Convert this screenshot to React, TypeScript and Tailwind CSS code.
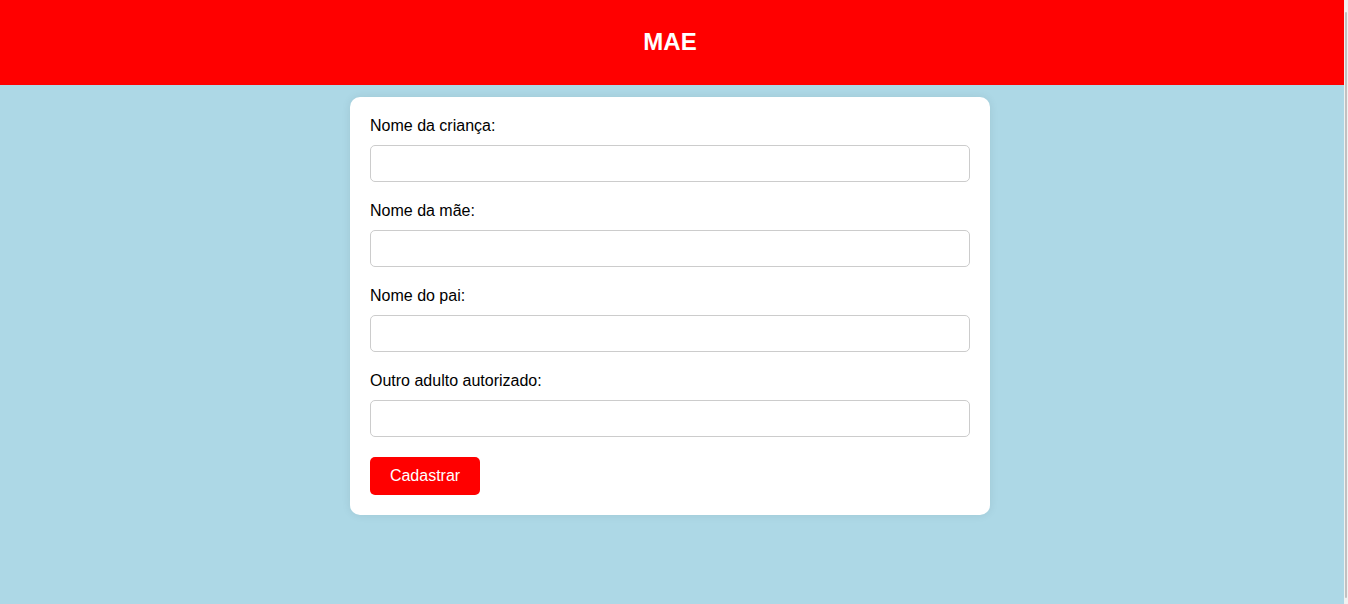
import React from 'react';

const fields = [
  'Nome da criança:',
  'Nome da mãe:',
  'Nome do pai:',
  'Outro adulto autorizado:',
];

export default function App() {
  return (
    <div className="flex h-[604px] w-[1348px] overflow-hidden bg-[#add8e6] font-['Liberation_Sans',Arial,sans-serif]">
      <div className="flex w-[1344px] flex-col">
        {/* Header */}
        <header className="flex h-[85px] items-center justify-center bg-[#ff0000] pr-[4px] pb-[2px]">
          <h1 className="text-[24px] font-bold leading-none text-white">MAE</h1>
        </header>

        {/* Form card */}
        <div className="ml-[350px] mt-[12px] w-[640px] rounded-[10px] bg-white p-[20px] shadow-[0_0_10px_rgba(0,0,0,0.08)]">
          {fields.map((label) => (
            <div key={label}>
              <label className="mb-[10px] block h-[18px] text-[16px] leading-[18px] text-black">{label}</label>
              <input
                type="text"
                className="mb-[20px] block h-[37px] w-[600px] rounded-[5px] border border-[#cccccc] bg-white px-[10px] outline-none"
              />
            </div>
          ))}
          <button className="h-[38px] w-[110px] rounded-[5px] bg-[#ff0000] text-[16px] text-white">
            Cadastrar
          </button>
        </div>
      </div>

      {/* Scrollbar strip */}
      <div className="flex w-[4px] flex-col bg-[#f1f1f1] px-[1px] pt-[12px] pb-[6px]">
        <div className="flex-1 rounded-full bg-[#c1c1c1]" />
      </div>
    </div>
  );
}
